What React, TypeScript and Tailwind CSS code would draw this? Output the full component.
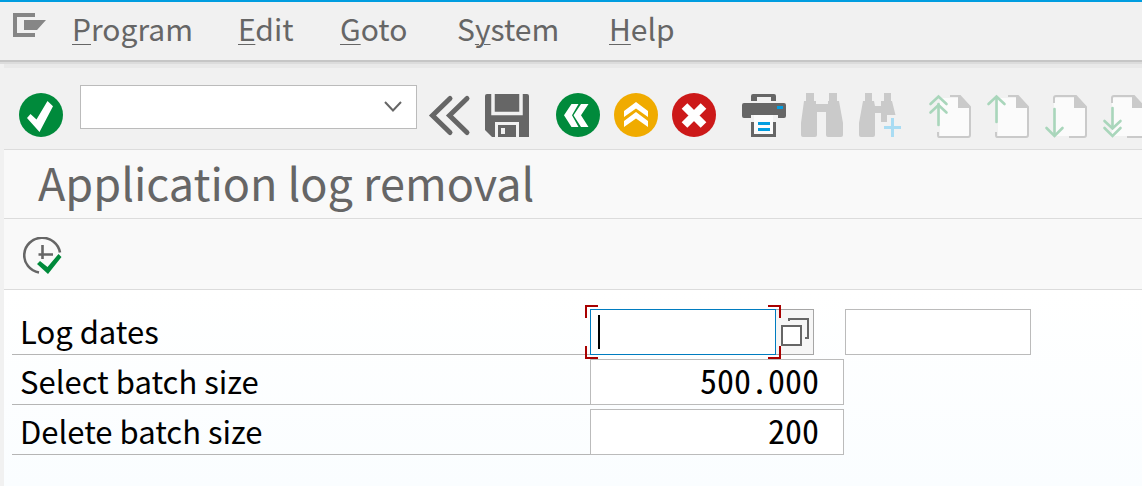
import type { ReactNode } from 'react';

const menus = [
  { before: '', key: 'P', after: 'rogram', width: 'w-[166px]' },
  { before: '', key: 'E', after: 'dit', width: 'w-[102px]' },
  { before: '', key: 'G', after: 'oto', width: 'w-[117px]' },
  { before: 'S', key: 'y', after: 'stem', width: 'w-[152px]' },
  { before: '', key: 'H', after: 'elp', width: 'w-[80px]' },
];

function Icon({ children }: { children: ReactNode }) {
  return (
    <svg viewBox="0 0 44 44" fill="none" aria-hidden="true" className="block h-11 w-11 overflow-visible">
      {children}
    </svg>
  );
}

function ToolButton({ label, disabled, children }: { label: string; disabled?: boolean; children: ReactNode }) {
  return (
    <button type="button" aria-label={label} disabled={disabled} className="shrink-0">
      <Icon>{children}</Icon>
    </button>
  );
}

function PageUp({ double }: { double?: boolean }) {
  return (
    <>
      <path d="M12 5H31L41 15V43H12Z" fill="#fbfbfb" />
      <path d="M22 3H32L42 14V42Q42 44 40 44H11Q10 44 10 42V39" stroke="#cacaca" strokeWidth="2" />
      <path d="M30 3H32L42 14V15H30Z" fill="#cacaca" />
      <g stroke="#a9d6bb" strokeWidth="2.6" strokeLinecap="round">
        <path d={double ? 'M10.5 32V11' : 'M10.5 29V4'} />
        <path d="M2.5 11L10.5 3.5L18.5 11" />
        {double && <path d="M2.5 19.5L10.5 12L18.5 19.5" />}
      </g>
    </>
  );
}

function PageDown({ double }: { double?: boolean }) {
  return (
    <>
      <path d="M12 5H31L41 15V43H10V5Z" fill="#fbfbfb" />
      <path d="M10 10V5Q10 3 12 3H32L42 14V42Q42 44 40 44H25" stroke="#cacaca" strokeWidth="2" />
      <path d="M30 3H32L42 14V15H30Z" fill="#cacaca" />
      <g stroke="#a9d6bb" strokeWidth="2.6" strokeLinecap="round">
        <path d={double ? 'M10.5 15V35' : 'M10.5 16V42'} />
        <path d="M2.5 35L10.5 43L18.5 35" />
        {double && <path d="M2.5 28L10.5 35.5L18.5 28" />}
      </g>
    </>
  );
}

function Toolbar() {
  return (
    <div className="flex h-[82px] items-start overflow-hidden border-b border-[#dcdcdc] pt-[17px] pl-[15px]">
      <div className="flex shrink-0 pt-2">
        <ToolButton label="Enter">
          <circle cx="22" cy="22" r="22" fill="#008a3b" />
          <path d="M8 25L11.5 21L17.5 26.5L28.5 8L34 13.3L20.5 39Z" fill="#fff" />
        </ToolButton>
      </div>
      <div className="ml-[17px] flex h-11 w-[337px] shrink-0 border border-[#bbb] bg-white">
        <input aria-label="Command" className="min-w-0 flex-1 bg-transparent px-2 text-[28px] outline-none" />
        <button type="button" aria-label="Command history" className="flex w-[46px] items-center justify-center">
          <svg viewBox="0 0 18 12" fill="none" className="h-3 w-[18px]" aria-hidden="true">
            <path d="M1 1L9 9.5L17 1" stroke="#666" strokeWidth="2" />
          </svg>
        </button>
      </div>
      <div className="ml-[10px] flex shrink-0 gap-[26px] pt-2">
        <div className="flex gap-[14px] pr-px">
          <ToolButton label="Previous">
            <path d="M23 5.5L5.5 22.5L23 39.5M40 5.5L22.5 22.5L40 39.5" stroke="#666" strokeWidth="5" strokeLinecap="round" />
          </ToolButton>
          <ToolButton label="Save">
            <path d="M2 1H42Q44 1 44 3V44H7L0 37V3Q0 1 2 1Z" fill="#666" />
            <path d="M8 1V20.5H36V1" stroke="#f1f1f1" strokeWidth="3.5" />
            <path d="M11.5 44V30.5H32.5V44" stroke="#f1f1f1" strokeWidth="3" />
            <path d="M16 35H20V41H16Z" fill="#f1f1f1" />
          </ToolButton>
        </div>
        <div className="flex gap-[14px]">
          <ToolButton label="Back">
            <circle cx="22" cy="22" r="22" fill="#008a3b" />
            <path d="M8 22.3L15.5 11H22.5L16 22.3L22.5 34H15.5ZM17.5 22.3L25 11H32.5L25 22.3L32.5 34H25Z" fill="#fff" />
          </ToolButton>
          <ToolButton label="Exit">
            <circle cx="22" cy="22" r="22" fill="#f0ab00" />
            <path d="M10 18L22 9L34 18V24L22 15.5L10 24ZM10 28L22 19L34 28V34L22 25.5L10 34Z" fill="#fff" />
          </ToolButton>
          <ToolButton label="Cancel">
            <circle cx="22" cy="22" r="22" fill="#cc1919" />
            <path d="M12.5 13L31.5 32M31.5 13L12.5 32" stroke="#fff" strokeWidth="8" />
          </ToolButton>
        </div>
        <div className="flex gap-[14px]">
          <ToolButton label="Print">
            <path d="M9 8V3Q9 1 11 1H32Q34 1 34 3V8H29V4H15V8Z" fill="#666" />
            <path d="M2 10H42Q44 10 44 12V23Q44 25 42 25H36V22H9V25H2Q0 25 0 23V12Q0 10 2 10Z" fill="#666" />
            <path d="M35 13H41V16H35Z" fill="#009de0" />
            <path d="M12 22H31V41H12Z" fill="#fbfbfb" />
            <path d="M10.5 29V42.5H32.5V29" stroke="#666" strokeWidth="3" />
            <path d="M16 29H28V32H16ZM16 35H28V38H16Z" fill="#009de0" />
          </ToolButton>
          <ToolButton label="Find" disabled>
            <path d="M6 0H14V8H16V11H28V8H29V0H37V8H39L43 30V42Q43 44 41 44H28Q26 44 26 42V19H17V42Q17 44 15 44H3Q1 44 1 42V30L4 8H6Z" fill="#cacaca" />
          </ToolButton>
          <ToolButton label="Find next" disabled>
            <path d="M7 0H14V8H16L17 13H23V8H26V0H33V8H34L37.5 22H29V29H23V20H17V42Q17 44 15 44H3Q1 44 1 42V30L5 8H7Z" fill="#cacaca" />
            <path d="M26 34.5H43M34.5 25V44" stroke="#a9dcf3" strokeWidth="3" />
          </ToolButton>
        </div>
        <div className="flex gap-[14px]">
          <ToolButton label="First page" disabled><PageUp double /></ToolButton>
          <ToolButton label="Previous page" disabled><PageUp /></ToolButton>
          <ToolButton label="Next page" disabled><PageDown /></ToolButton>
          <ToolButton label="Last page" disabled><PageDown double /></ToolButton>
        </div>
      </div>
    </div>
  );
}

function Row({ id, label, children }: { id: string; label: string; children: ReactNode }) {
  return (
    <div className="flex h-[46px]">
      <label htmlFor={id} className="flex w-[578px] shrink-0 items-center border-b border-[#b5b5b5] pb-0.5 pl-2 text-[31px] leading-10">
        {label}
      </label>
      {children}
    </div>
  );
}

export default function App() {
  return (
    <div className="flex min-h-screen flex-col overflow-hidden border-t-2 border-[#009de0] bg-[#f1f1f1] font-['Noto_Sans_CJK_JP',sans-serif] text-black">
      <nav className="flex h-[58px] shrink-0 items-center text-[30px] leading-10 text-[#666]">
        <button type="button" aria-label="Window menu" className="mr-[26px] ml-[13px] self-start pt-[11px]">
          <svg viewBox="0 0 33 24" className="block h-6 w-[33px]" aria-hidden="true" fill="#868686">
            <path d="M0 0H22V4H4V20H22V24H0ZM11 7H33L24 17H11Z" />
          </svg>
        </button>
        {menus.map((m) => (
          <button key={m.key} type="button" className={`${m.width} pb-1.5 text-left`}>
            {m.before}
            <span className="underline decoration-1 underline-offset-3">{m.key}</span>
            {m.after}
          </button>
        ))}
      </nav>
      <div className="h-1 shrink-0 border-t-2 border-[#c6c6c6] bg-[#dcdcdc]" />

      <div className="ml-1 flex flex-1 flex-col">
        <div className="h-1 bg-[#e9e9e9]" />
        <Toolbar />

        <header className="flex h-[69px] items-center border-b border-[#dcdcdc] bg-[#f9f9f9] pb-1 pl-[34px]">
          <h1 className="text-[45px] leading-[60px] text-[#666]">Application log removal</h1>
        </header>

        <div className="flex h-[71px] items-center border-b border-[#dcdcdc] bg-[#f9f9f9] pt-1 pl-[19px]">
          <button type="button" aria-label="Execute">
            <svg viewBox="0 0 39 38" fill="none" className="block h-[38px] w-[39px]" aria-hidden="true">
              <path d="M37 15.5A18 17.5 0 1 0 16 35.5" stroke="#666" strokeWidth="2.6" />
              <path d="M19.5 8V22M15.5 17.5H30" stroke="#666" strokeWidth="2.6" />
              <path d="M14 27L17 24L24.5 30L35.5 17L38.5 20L25 37Z" fill="#008a3b" />
            </svg>
          </button>
        </div>

        <main className="flex flex-1 flex-col gap-1 bg-linear-to-b from-white to-[#fafdff] pt-[19px] pb-8 pl-2">
          <Row id="date-from" label="Log dates">
            <div className="relative flex">
              <input id="date-from" autoFocus className="w-[186px] border border-[#007cc0] bg-white px-2 text-[34px] caret-transparent outline-none" />
              {/* text cursor */}
              <span className="absolute top-[6px] left-2 h-[34px] w-[2px] bg-black" />
              <button type="button" aria-label="Choose date" className="flex w-[38px] items-center justify-center border border-l-0 border-[#a6a6a6] bg-[#f6f6f6]">
                <svg viewBox="0 0 28 28" fill="none" className="h-7 w-7" aria-hidden="true" stroke="#666" strokeWidth="2">
                  <path d="M1 8H20V27H1Z" fill="#fff" />
                  <path d="M8 3V1H27V20H24" />
                </svg>
              </button>
              {/* focus corners */}
              <span className="absolute -top-1 -left-[5px] h-[13px] w-[13px] border-t-2 border-l-2 border-[#a80000]" />
              <span className="absolute -top-1 left-[178px] h-[13px] w-[13px] border-t-2 border-r-2 border-[#a80000]" />
              <span className="absolute -bottom-1 -left-[5px] h-[13px] w-[13px] border-b-2 border-l-2 border-[#a80000]" />
              <span className="absolute -bottom-1 left-[178px] h-[13px] w-[13px] border-r-2 border-b-2 border-[#a80000]" />
            </div>
            <input aria-label="Log dates to" className="ml-[31px] w-[186px] border border-[#bbb] bg-white px-2 text-[34px] outline-none" />
          </Row>
          <Row id="select-size" label="Select batch size">
            <input id="select-size" defaultValue="500.000" className="w-[254px] border border-[#bbb] bg-white pr-6 pb-1 text-right text-[34px] leading-10 [font-feature-settings:'hwid'] outline-none" />
          </Row>
          <Row id="delete-size" label="Delete batch size">
            <input id="delete-size" defaultValue="200" className="w-[254px] border border-[#bbb] bg-white pr-6 pb-1 text-right text-[34px] leading-10 [font-feature-settings:'hwid'] outline-none" />
          </Row>
        </main>
      </div>
    </div>
  );
}
